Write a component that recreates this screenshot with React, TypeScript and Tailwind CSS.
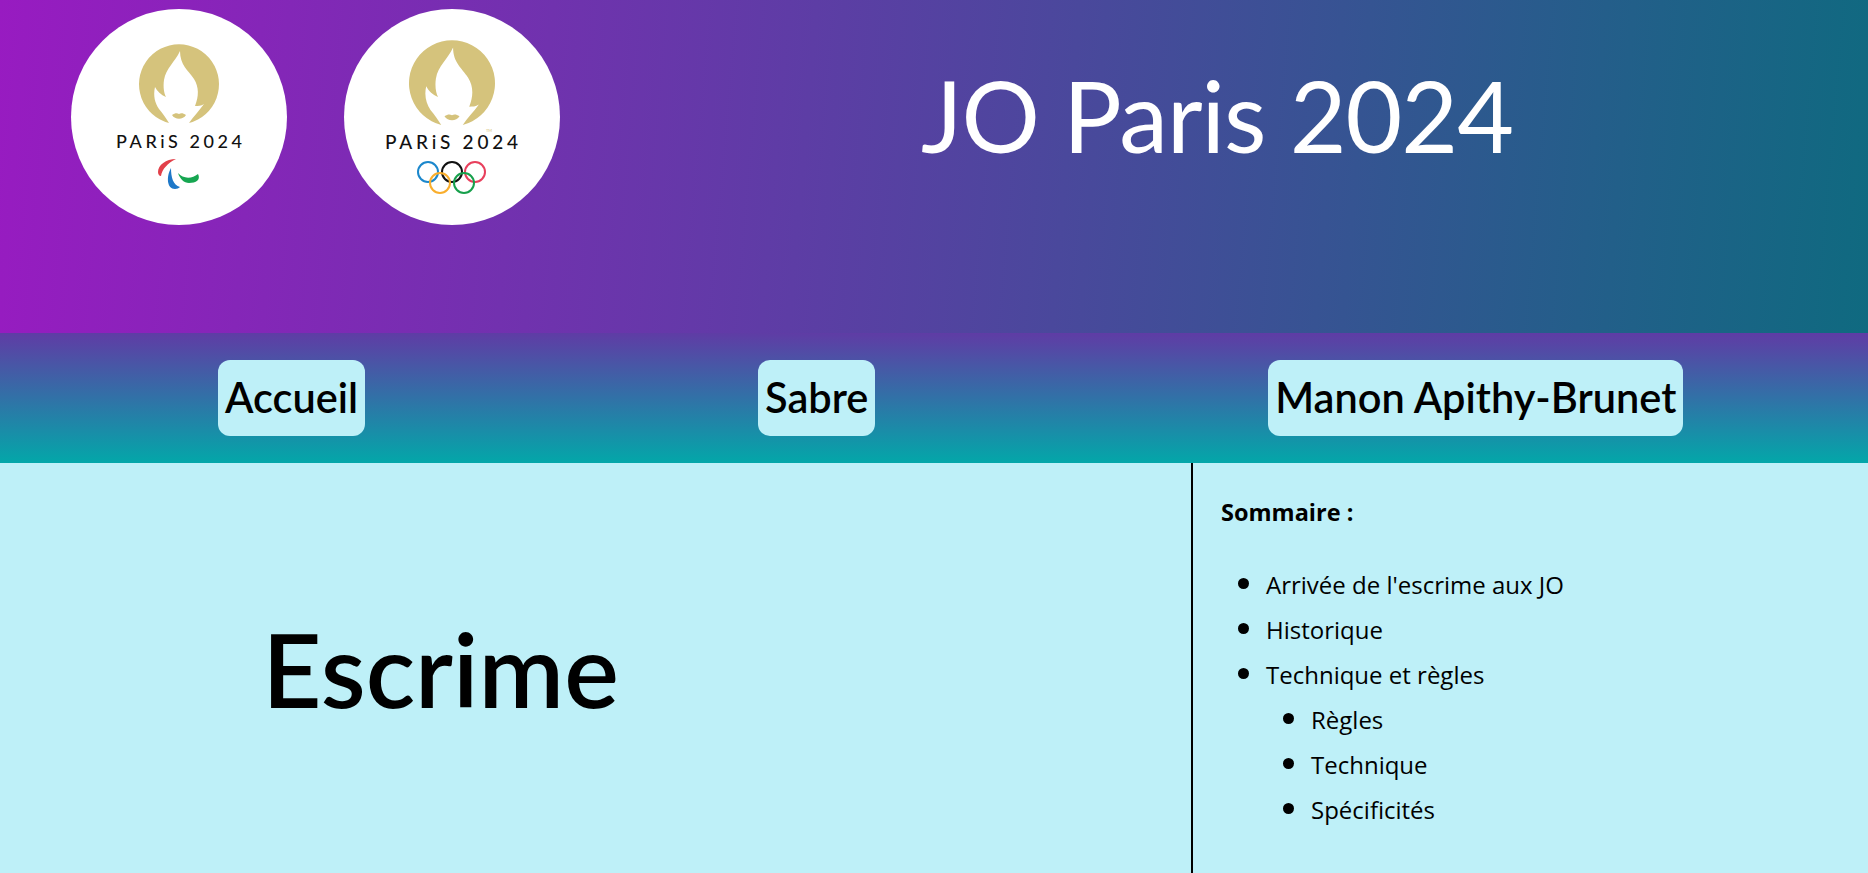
const display = { fontFamily: 'Lato, "Open Sans", sans-serif' };

function Flame({ cx, cy, r }: { cx: number; cy: number; r: number }) {
  const s = r / 40;
  return (
    <g transform={`translate(${cx} ${cy}) scale(${s})`}>
      <path d="M-10 39 A40 40 0 1 1 10 39 C14 33 20 27 25 20 C22 22 19 22 16 22 C20 12 20 3 15 -5 C9 -14 1 -19 1 -33 C-4 -22 -13 -16 -15 -4 C-16 3 -15 9 -13 13 C-18 11 -22 7 -24 3 C-26 12 -24 19 -20 25 C-16 30 -13 34 -10 39 Z" fill="#d5c37c" />
      <path d="M-7 31 C-4 29 -2 29 0 30 C2 29 4 29 7 31 C4 36 -4 36 -7 31 Z" fill="#d5c37c" />
    </g>
  );
}

function Logo({ kind }: { kind: "para" | "oly" }) {
  const textStyle = { fontFamily: 'Lato, sans-serif' };
  return (
    <div className="w-[216px] h-[216px] rounded-full bg-white shrink-0">
      {kind === "para" ? (
        <svg viewBox="0 0 216 216" width="216" height="216">
          <Flame cx={108} cy={75} r={40} />
          <text x="45" y="139" fontSize="18" fontWeight="500" textLength="126" lengthAdjust="spacing" fill="#111" style={textStyle}>PARiS 2024</text>
          <path d="M105 150 C95 150 87 156 87 163 C87 165 88 167 90 167 C91 160 97 154 105 150 Z" fill="#e2404a" />
          <path d="M100 159 C95 168 96 180 104 180 C106 180 108 179 109 178 C102 176 100 168 100 159 Z" fill="#1e78c8" />
          <path d="M107 164 C112 170 121 170 127 165 C130 171 125 174 118 174 C113 174 109 170 107 164 Z" fill="#16a651" />
        </svg>
      ) : (
        <svg viewBox="0 0 216 216" width="216" height="216">
          <Flame cx={108} cy={74} r={43} />
          <text x="142" y="123" fontSize="4" fill="#d5c37c" style={textStyle}>TM</text>
          <text x="41" y="140" fontSize="19" fontWeight="500" textLength="133" lengthAdjust="spacing" fill="#111" style={textStyle}>PARiS 2024</text>
          <g fill="none" strokeWidth="2">
            <circle cx="84" cy="163" r="10" stroke="#1b87cc" />
            <circle cx="108" cy="163" r="10" stroke="#111" />
            <circle cx="131" cy="163" r="10" stroke="#e83f5c" />
            <circle cx="96" cy="174" r="10" stroke="#f9ae2d" />
            <circle cx="120" cy="174" r="10" stroke="#17a04c" />
          </g>
        </svg>
      )}
    </div>
  );
}

const navBtn = "bg-[#bef0f8] rounded-[12px] h-[76px] flex items-center justify-center px-[7px] pb-[2px] text-[41.5px] font-semibold text-black";

export default function App() {
  return (
    <div className="h-screen overflow-hidden flex flex-col bg-[#bef0f8] text-black" style={{ fontFamily: '"Open Sans", sans-serif' }}>
      <header className="h-[333px] shrink-0 flex items-start bg-[linear-gradient(95deg,#981bc1,#0f6a80)]">
        <div className="flex gap-[57px] pl-[71px] pt-[9px]">
          <Logo kind="para" />
          <Logo kind="oly" />
        </div>
        <h1 className="flex-1 text-center text-white text-[98px] leading-none tracking-[-1px] pt-[66px] pl-[6px]" style={display}>JO Paris 2024</h1>
      </header>
      <nav className="h-[130px] shrink-0 flex items-center pl-[218px] gap-[393px] bg-[linear-gradient(180deg,#5f3ca5,#03a7a9)]" style={display}>
        <a className={navBtn}>Accueil</a>
        <a className={navBtn}>Sabre</a>
        <a className={navBtn}>Manon Apithy-Brunet</a>
      </nav>
      <main className="flex-1 flex">
        <div className="w-[1191px] shrink-0 flex items-center justify-center pr-[310px]">
          <h2 className="text-[103px] font-semibold leading-none" style={display}>Escrime</h2>
        </div>
        <div className="flex-1 border-l-2 border-black pl-[28px] pt-[32px] text-[24px]">
          <p className="font-bold text-[23.5px]">Sommaire :</p>
          <ul className="list-disc pl-[45px] mt-[31px] leading-[43px] marker:text-[30px]">
            <li>Arrivée de l'escrime aux JO</li>
            <li>Historique</li>
            <li>Technique et règles
              <ul className="list-disc pl-[45px]">
                <li>Règles</li>
                <li>Technique</li>
                <li>Spécificités</li>
              </ul>
            </li>
          </ul>
        </div>
      </main>
    </div>
  );
}
